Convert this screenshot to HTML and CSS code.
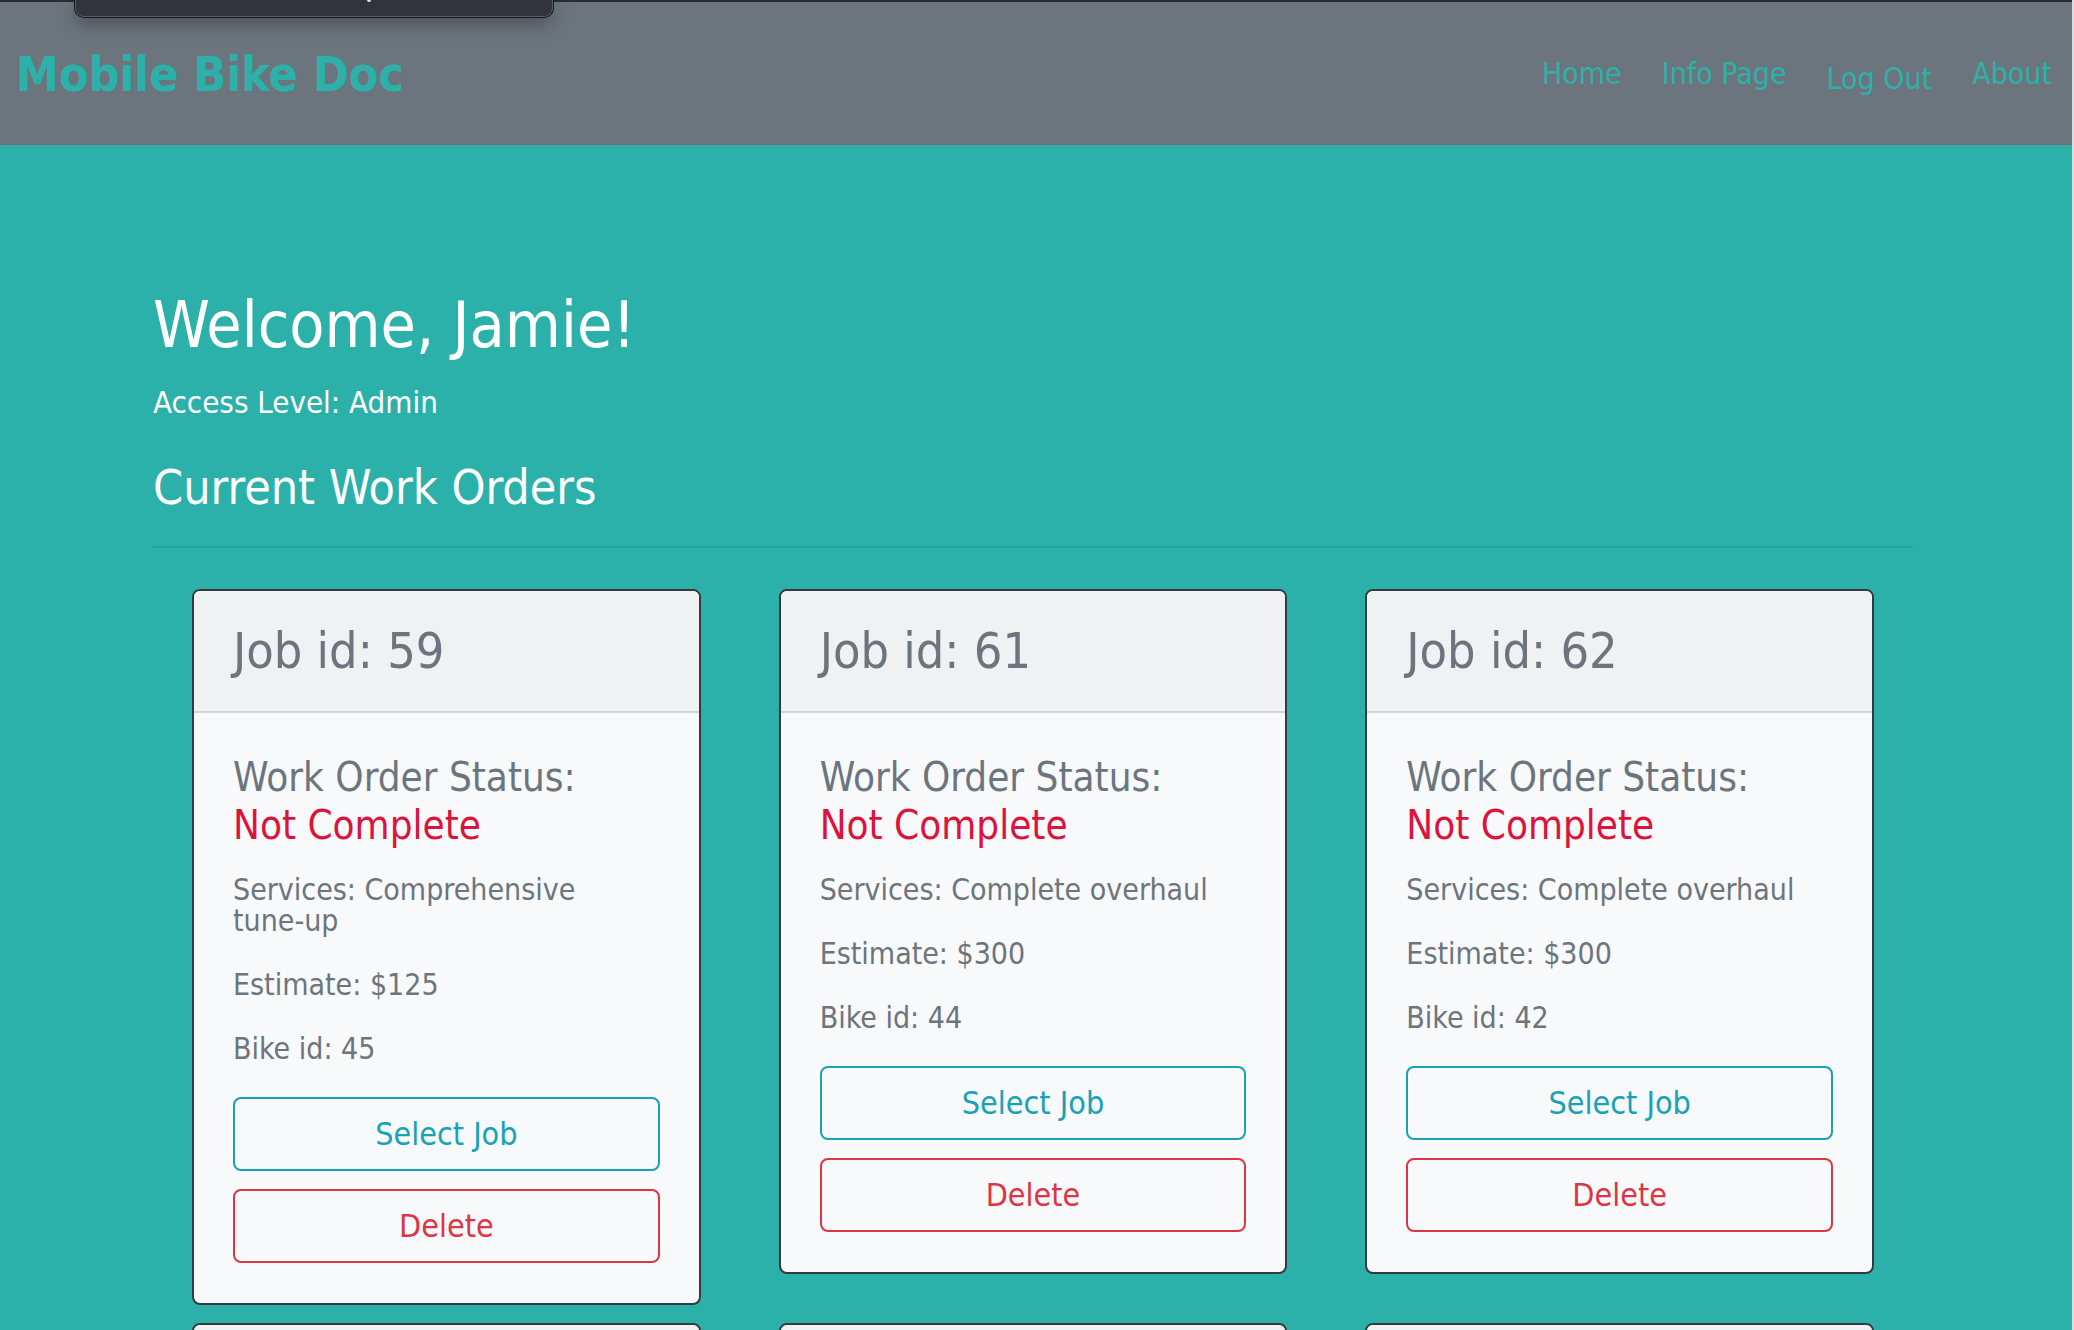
FILE: index.html
```html
<!DOCTYPE html>
<html lang="en">
<head>
	<meta charset="utf-8">
	<title>Mobile Bike Doc</title>
	<link rel="stylesheet" href="styles.css">
</head>
<body>
	<header class="topbar">
		<a class="brand" href="#">Mobile Bike Doc</a>
		<nav class="nav-links">
			<a href="#">Home</a>
			<a href="#">Info Page</a>
			<a class="nav-logout" href="#">Log Out</a>
			<a href="#">About</a>
		</nav>
	</header>
	<div class="tooltip-tab"><span class="tooltip-mark"></span></div>

	<main class="page">
		<h1 class="welcome">Welcome, Jamie!</h1>
		<p class="access">Access Level: Admin</p>
		<h2 class="section-title">Current Work Orders</h2>
		<hr class="divider">

		<section class="orders">
			<article class="order-card">
				<div class="order-head"><h4>Job id: 59</h4></div>
				<div class="order-body">
					<h5 class="status">Work Order Status:<span class="status-value">Not Complete</span></h5>
					<p>Services: Comprehensive <span class="nowrap">tune-up</span></p>
					<p>Estimate: $125</p>
					<p>Bike id: 45</p>
					<button class="btn btn-select">Select Job</button>
					<button class="btn btn-delete">Delete</button>
				</div>
			</article>
			<article class="order-card">
				<div class="order-head"><h4>Job id: 61</h4></div>
				<div class="order-body">
					<h5 class="status">Work Order Status:<span class="status-value">Not Complete</span></h5>
					<p>Services: Complete overhaul</p>
					<p>Estimate: $300</p>
					<p>Bike id: 44</p>
					<button class="btn btn-select">Select Job</button>
					<button class="btn btn-delete">Delete</button>
				</div>
			</article>
			<article class="order-card">
				<div class="order-head"><h4>Job id: 62</h4></div>
				<div class="order-body">
					<h5 class="status">Work Order Status:<span class="status-value">Not Complete</span></h5>
					<p>Services: Complete overhaul</p>
					<p>Estimate: $300</p>
					<p>Bike id: 42</p>
					<button class="btn btn-select">Select Job</button>
					<button class="btn btn-delete">Delete</button>
				</div>
			</article>
			<article class="order-card">
				<div class="order-head"><h4>Job id: 63</h4></div>
				<div class="order-body">
					<h5 class="status">Work Order Status:<span class="status-value">Not Complete</span></h5>
					<p>Services: Basic tune-up</p>
					<p>Estimate: $75</p>
					<p>Bike id: 46</p>
					<button class="btn btn-select">Select Job</button>
					<button class="btn btn-delete">Delete</button>
				</div>
			</article>
			<article class="order-card">
				<div class="order-head"><h4>Job id: 64</h4></div>
				<div class="order-body">
					<h5 class="status">Work Order Status:<span class="status-value">Not Complete</span></h5>
					<p>Services: Flat repair</p>
					<p>Estimate: $20</p>
					<p>Bike id: 47</p>
					<button class="btn btn-select">Select Job</button>
					<button class="btn btn-delete">Delete</button>
				</div>
			</article>
			<article class="order-card">
				<div class="order-head"><h4>Job id: 65</h4></div>
				<div class="order-body">
					<h5 class="status">Work Order Status:<span class="status-value">Not Complete</span></h5>
					<p>Services: Complete overhaul</p>
					<p>Estimate: $300</p>
					<p>Bike id: 48</p>
					<button class="btn btn-select">Select Job</button>
					<button class="btn btn-delete">Delete</button>
				</div>
			</article>
		</section>
	</main>
</body>
</html>
```

FILE: styles.css
```css
html{
	background: #dcdcdc;
}
body{
	margin: 0 2px 0 0;
	min-height: 100vh;
	background: #2cb1aa;
	font-family: "DejaVu Sans Condensed", "DejaVu Sans", sans-serif;
	font-stretch: condensed;
	color: #fff;
}

/* barra superior */
.topbar{
	box-sizing: border-box;
	height: 145px;
	display: flex;
	align-items: center;
	justify-content: space-between;
	padding: 0 0 0 16px;
	border-top: 2px solid #2b2c2e;
	background: #6c757d;
}
.brand{
	font-size: 48px;
	font-weight: bold;
	color: #2cb1aa;
	text-decoration: none;
}
.nav-links{
	display: flex;
	align-items: center;
}
.nav-links a{
	padding: 0 20px;
	font-size: 30px;
	color: #2cb1aa;
	text-decoration: none;
}
.nav-links .nav-logout{
	margin-top: 9px;
}
.tooltip-tab{
	position: absolute;
	top: 0;
	left: 75px;
	width: 476px;
	height: 16px;
	background: #313438;
	border: 1px solid #5b5e62;
	border-top: none;
	border-radius: 0 0 9px 9px;
	box-shadow: 0 0 0 1px #15161a, 0 6px 18px rgba(0,0,0,0.35);
}
.tooltip-mark{
	position: absolute;
	left: 291px;
	top: 0;
	width: 4px;
	height: 2px;
	border-radius: 0 0 2px 2px;
	background: #e8e8e8;
}

/* contenido */
.page{
	width: 1760px;
	padding: 142px 0 0 153px;
}
.welcome{
	margin: 0 0 16px;
	font-size: 64px;
	font-weight: normal;
	line-height: 1.2;
}
.access{
	margin: 0 0 32px;
	font-size: 31px;
	line-height: 45px;
}
.section-title{
	margin: 0;
	font-size: 48px;
	font-weight: normal;
	line-height: 60px;
}
.divider{
	margin: 29px 0 41px;
	border: 0;
	border-top: 2px solid rgba(0,0,0,0.08);
}

.orders{
	display: grid;
	grid-template-columns: repeat(3, 1fr);
	align-items: start;
	column-gap: 78px;
	row-gap: 18px;
	padding: 0 39px;
}
.order-card{
	border: 2px solid #343a40;
	border-radius: 8px;
	background: #f8f9fa;
	color: #6c757d;
	overflow: hidden;
}
.order-head{
	padding: 31px 39px;
	background: #f0f1f3;
	border-bottom: 2px solid #d3d5d7;
}
.order-head h4{
	margin: 0;
	font-size: 50px;
	font-weight: normal;
	line-height: 58px;
}
.order-body{
	padding: 40px 39px;
}
.status{
	margin: 0 0 25px;
	font-size: 40px;
	font-weight: normal;
	line-height: 48px;
}
.status-value{
	display: block;
	color: #dc143c;
}
.order-body p{
	margin: 0 0 33px;
	font-size: 30px;
	line-height: 31px;
}
.nowrap{
	white-space: nowrap;
}
.btn{
	display: block;
	box-sizing: border-box;
	width: 100%;
	height: 74px;
	margin: 0;
	border: 2px solid;
	border-radius: 8px;
	background: transparent;
	font-family: inherit;
	font-stretch: condensed;
	font-size: 32px;
	cursor: pointer;
}
.btn-select{
	color: #17a2b8;
	border-color: #17a2b8;
}
.btn-delete{
	margin-top: 18px;
	color: #dc3545;
	border-color: #dc3545;
}
```
